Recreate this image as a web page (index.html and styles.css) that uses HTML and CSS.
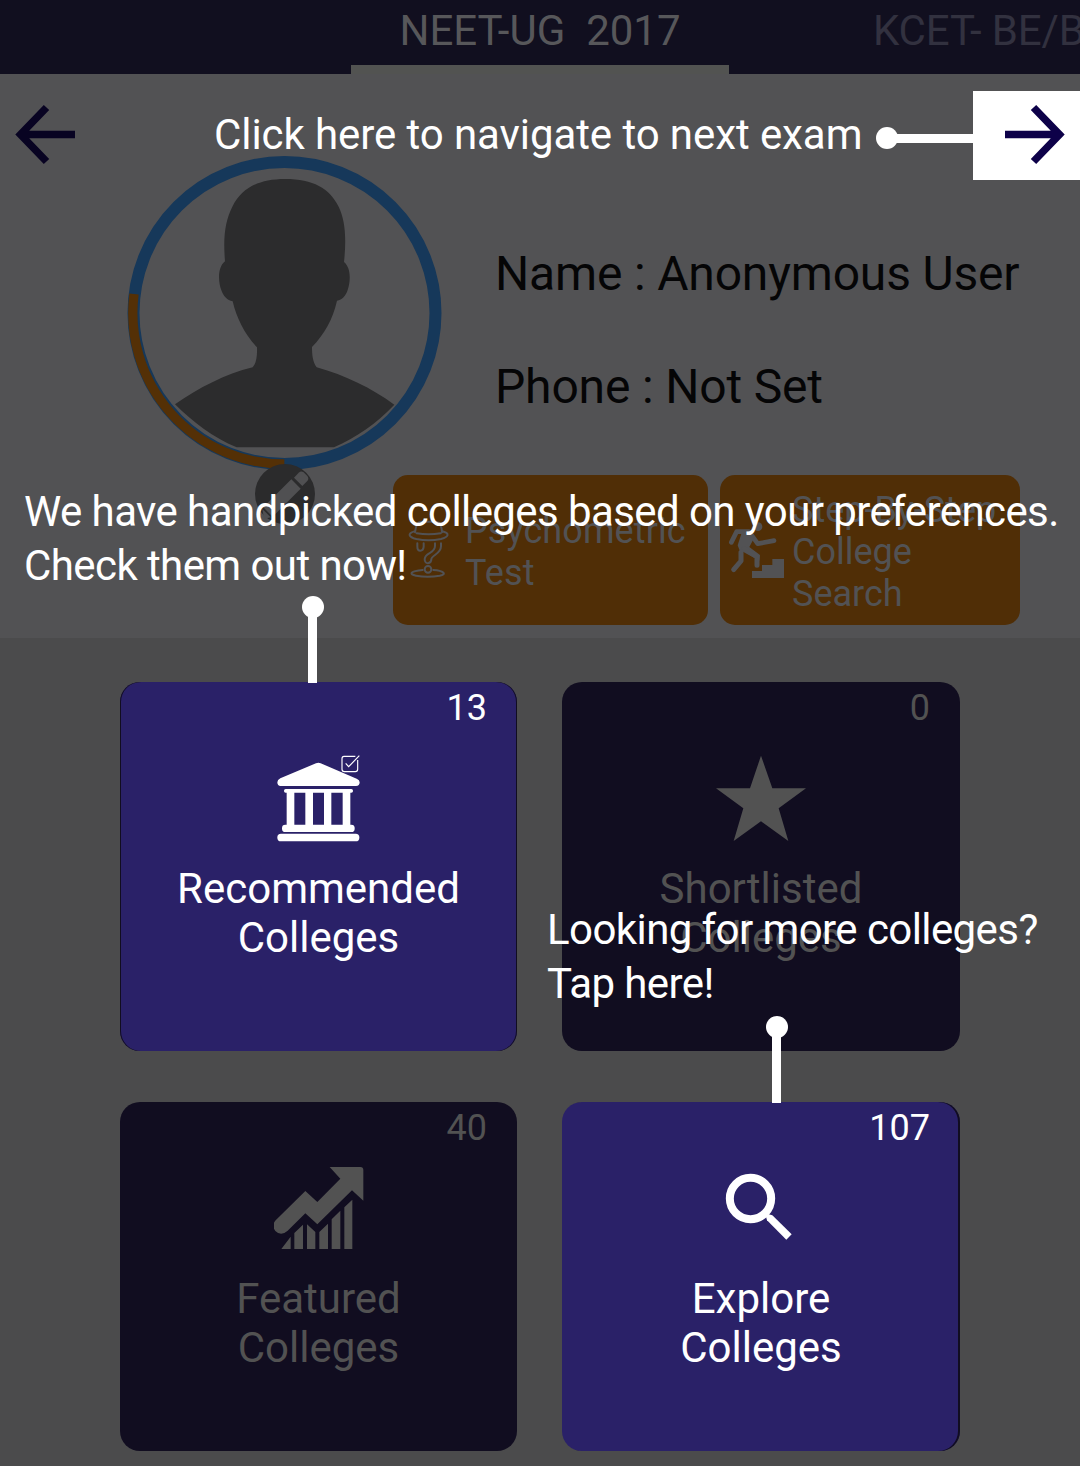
FILE: index.html
```html
<!DOCTYPE html>
<html lang="en">
<head>
<meta charset="utf-8">
<title>College Finder</title>
<link rel="stylesheet" href="styles.css">
</head>
<body>
<div class="screen">
  <header class="tabs">
    <div class="tab tab-active"><span>NEET-UG&nbsp; 2017</span></div>
    <div class="tab tab-next"><span>KCET- BE/B</span></div>
  </header>

  <section class="profile">
    <nav class="exam-nav">
      <button class="nav-btn nav-prev" aria-label="Previous exam">
        <svg width="62" height="62" viewBox="0 0 62 62"><path d="M61 30.500H8M32.500 3.500 6.500 30.500 32.500 57.500" fill="none" stroke="currentColor" stroke-width="7.500"/></svg>
      </button>
      <button class="nav-btn nav-next" aria-label="Next exam">
        <svg width="62" height="62" viewBox="0 0 62 62"><path d="M1 30.500H54M29.500 3.500 55.500 30.500 29.500 57.500" fill="none" stroke="currentColor" stroke-width="7.500"/></svg>
      </button>
    </nav>

    <div class="profile-body">
      <div class="avatar">
        <svg width="315" height="314" viewBox="51 48 945 942">
          <circle cx="523.500" cy="519" r="453" fill="none" stroke="#16385a" stroke-width="36"/>
          <path d="M523 972A453 453 0 0 1 72 462" fill="none" stroke="#543006" stroke-width="28"/>
          <path d="M525 117C445 117 395 145 367 200C345 245 339 290 345 364C322 382 325 425 333 448C340 470 352 481 368 484C380 535 404 583 441 622C442 648 439 670 428 682C345 702 266 744 195 793C250 848 310 893 380 922H672C738 893 800 850 853 794C785 745 705 705 620 682C608 665 606 645 606 621C643 582 668 540 681 482C697 480 707 468 713 450C723 420 722 382 702 366C710 290 705 240 686 200C658 145 610 117 525 117Z" fill="#2c2c2d"/>
        </svg>
        <span class="edit">
          <svg width="60" height="60" viewBox="75 73 180 180" fill="#505052">
            <path d="M192 114 206 99Q213 93 221 98L232 109Q238 116 232 124L217 139Z"/>
            <path d="M184 119 212 147 128 231 100 203Z"/>
            <path d="M97 208 122 233 102 238Z"/>
          </svg>
        </span>
      </div>
      <div class="details">
        <p class="field name">Name : Anonymous User</p>
        <p class="field phone">Phone : Not Set</p>
      </div>
    </div>

    <div class="actions">
      <button class="action action-test">
        <svg width="41" height="60" viewBox="54 168 123 180" fill="none" stroke="#525254" stroke-width="6" stroke-linecap="round">
          <path d="M75 205C77 184 83 174 92 173H140C149 175 155 188 156 205"/>
          <path d="M73 202C50 209 57 219 79 225Q116 233 153 225C178 218 179 208 157 202M80 208Q116 214 152 208"/>
          <path d="M82 238V248Q82 260 91 260T101 248V238M135 238V246C135 270 104 264 104 286C104 303 124 300 124 286C124 274 153 270 153 247V238"/>
          <circle cx="114" cy="316" r="10"/><path d="M98 318C60 321 56 331 78 335Q114 341 149 335C173 330 160 320 130 318"/>
        </svg>
        <span>Psychometric<br>Test</span>
      </button>
      <button class="action action-search">
        <svg width="57" height="60" viewBox="54 168 171 180" fill="none" stroke="#525254" stroke-width="16" stroke-linecap="round" stroke-linejoin="round">
          <circle cx="144" cy="188" r="13" fill="#525254" stroke="none"/>
          <path d="M64 235 80 203H117L143 239 192 230" stroke-width="14"/>
          <path d="M97 200H126L134 219 118 249 150 273 148 290 88 257 83 244Z" fill="#525254" stroke="none"/>
          <path d="M93 265V291L71 317M103 254 141 278V304" stroke-width="15"/>
          <path d="M126 342V321H156V303H187V285H222V342Z" fill="#525254" stroke="none"/>
        </svg>
        <span>Step-By-Step<br>College<br>Search</span>
      </button>
    </div>
  </section>

  <main class="tiles">
    <article class="tile tile-lit tile-inset-both">
      <span class="count">13</span>
      <svg class="icon" viewBox="41 42 270 270" fill="#fff">
        <path d="M167 70Q174 66 181 70L289 116Q298 120 298 127Q298 138 287 138H61Q51 138 51 127Q51 119 60 115Z"/>
        <rect x="71" y="147" width="207" height="11" rx="5"/>
        <path d="M79 155H102V258H79ZM135 155H158V258H135ZM191 155H213V258H191ZM247 155H270V258H247Z"/>
        <rect x="65" y="254" width="218" height="22" rx="10"/><rect x="51" y="281" width="246" height="23" rx="11"/>
        <path d="M285 49H251Q245 49 245 56V88Q245 95 252 95H285Q292 95 292 88V60M256 70 265 80 297 47" fill="none" stroke="#fff" stroke-width="3.500"/>
      </svg>
      <h2 class="label">Recommended<br>Colleges</h2>
    </article>
    <article class="tile">
      <span class="count">0</span>
      <svg class="icon" viewBox="528 252 270 270" fill="#525252"><path d="M663 257 697 355H798L716 415 745 513 663 454 581 513 610 415 528 355H630Z"/></svg>
      <h2 class="label">Shortlisted<br>Colleges</h2>
    </article>
    <article class="tile tile-short">
      <span class="count">40</span>
      <svg class="icon" viewBox="71 36 270 270" fill="#525252">
        <path d="M238 51H330Q339 51 339 60V152L305 121 201 223 165 190 112 242Q92 260 75 243Q62 226 76 211L165 123 201 156 270 86Z"/>
        <path d="M93 297 121 260V297ZM132 297V249L158 224V297ZM170 297V223L195 246V297ZM207 297V246L233 221V297ZM244 297V208L270 182V297ZM282 297V172L306 149V297Z"/>
      </svg>
      <h2 class="label">Featured<br>Colleges</h2>
    </article>
    <article class="tile tile-short tile-lit tile-inset-right">
      <span class="count">107</span>
      <svg class="icon" viewBox="528 216 270 270" fill="none" stroke="#fff">
        <circle cx="631.500" cy="325.500" r="62" stroke-width="24"/>
        <path d="M675 370 697 376 755 433 739 449 681 391Z" fill="#fff" stroke="none"/>
      </svg>
      <h2 class="label">Explore<br>Colleges</h2>
    </article>
  </main>

  <aside class="coach">
    <p class="tip tip-nav">Click here to navigate to next exam</p>
    <i class="pin pin-nav"></i>
    <p class="tip tip-picks">We have handpicked colleges based on your preferences.<br>Check them out now!</p>
    <i class="pin pin-picks"></i>
    <p class="tip tip-more">Looking for more colleges?<br>Tap here!</p>
    <i class="pin pin-more"></i>
  </aside>
</div>
</body>
</html>
```
FILE: styles.css
```css
* { box-sizing: border-box; }

body {
  margin: 0;
  font-family: Roboto, "Liberation Sans", sans-serif;
  background: #4b4b4c;
}

p, h2 { margin: 0; font-weight: 400; }

button { border: 0; padding: 0; font: inherit; text-align: left; }

svg { display: block; flex: none; }

.screen {
  position: relative;
  width: 1080px;
  height: 1466px;
  overflow: hidden;
  display: flex;
  flex-direction: column;
}

/* exam tabs */
.tabs {
  flex: none;
  display: flex;
  height: 74px;
  padding-left: 351px;
  background: #110f1f;
  font-size: 42px;
  line-height: 54px;
  white-space: nowrap;
}
.tab { padding-top: 4px; }
.tab-active {
  flex: none;
  width: 378px;
  text-align: center;
  color: #57575a;
  border-bottom: 9px solid #525351;
}
.tab-next {
  width: 351px;
  padding-left: 144px;
  overflow: hidden;
  color: #32313f;
  letter-spacing: -0.15px;
}

/* profile */
.profile { flex: none; height: 564px; background: #525254; }

.exam-nav {
  display: flex;
  justify-content: space-between;
  padding-top: 17px;
}
.nav-btn {
  display: flex;
  width: 107px;
  height: 89px;
  padding-top: 13px;
  background: none;
}
.nav-prev { padding-left: 14px; color: #080322; }
.nav-next { padding-left: 31px; color: #0d0149; background: #fff; }

.profile-body {
  display: flex;
  gap: 53px;
  margin-top: -24px;
  padding-left: 127px;
}
.avatar { position: relative; width: 315px; height: 314px; }
.edit {
  position: absolute;
  left: 128px;
  top: 308px;
  border-radius: 50%;
  background: #2b2b2c;
}
.details {
  display: flex;
  flex-direction: column;
  gap: 57px;
  padding-top: 90px;
}
.field {
  font-size: 48px;
  line-height: 56px;
  letter-spacing: -0.17px;
  color: #050506;
  white-space: nowrap;
}

.actions {
  display: flex;
  gap: 12px;
  margin-top: 5px;
  padding-left: 393px;
}
.action {
  display: flex;
  align-items: center;
  height: 150px;
  border-radius: 15px;
  background: #502e06;
  color: #525254;
  font-size: 36px;
  line-height: 42px;
  white-space: nowrap;
}
.action span { padding-top: 4px; }
.action-test { width: 315px; padding-left: 15px; gap: 16px; letter-spacing: 0.1px; }
.action-search { width: 300px; padding-left: 8px; gap: 7px; }

/* college tiles */
.tiles {
  display: grid;
  grid-template-columns: 397px 398px;
  grid-template-rows: 369px 349px;
  gap: 51px 45px;
  height: 828px;
  padding: 44px 120px 0;
  background: #4b4b4c;
}
.tile {
  display: flex;
  flex-direction: column;
  align-items: center;
  padding-top: 5px;
  border-radius: 20px;
  background: #110d20;
  color: #525252;
}
.tile-lit { background: #2a2168; color: #fff; }
.tile-inset-both { box-shadow: inset 1px 0 #110d20, inset -1px 0 #110d20; }
.tile-inset-right { box-shadow: inset -2px 0 #110d20; }
.count {
  align-self: flex-end;
  padding-right: 30px;
  font-size: 36px;
  line-height: 42px;
}
.icon { width: 90px; height: 90px; margin: 25px 0 20px; }
.tile-short .icon { margin: 13px 0 22px; }
.label { font-size: 42px; line-height: 49px; text-align: center; }

/* coach marks above the page */
.coach { position: absolute; inset: 0; color: #fff; pointer-events: none; }
.tip {
  position: absolute;
  font-size: 42px;
  line-height: 54px;
  letter-spacing: -0.58px;
  white-space: nowrap;
}
.tip-nav { left: 214px; top: 108px; letter-spacing: -0.08px; }
.tip-picks { left: 24px; top: 485px; }
.tip-more { left: 547px; top: 903px; }

.pin { position: absolute; background: #fff; }
.pin::before {
  content: "";
  position: absolute;
  width: 22px;
  height: 22px;
  border-radius: 50%;
  background: #fff;
}
.pin-nav { left: 887px; top: 134px; width: 86px; height: 9px; }
.pin-nav::before { left: -11px; top: -7px; }
.pin-picks { left: 308px; top: 607px; width: 9px; height: 76px; }
.pin-more { left: 772px; top: 1027px; width: 9px; height: 76px; }
.pin-picks::before, .pin-more::before { left: -6px; top: -11px; }
```
